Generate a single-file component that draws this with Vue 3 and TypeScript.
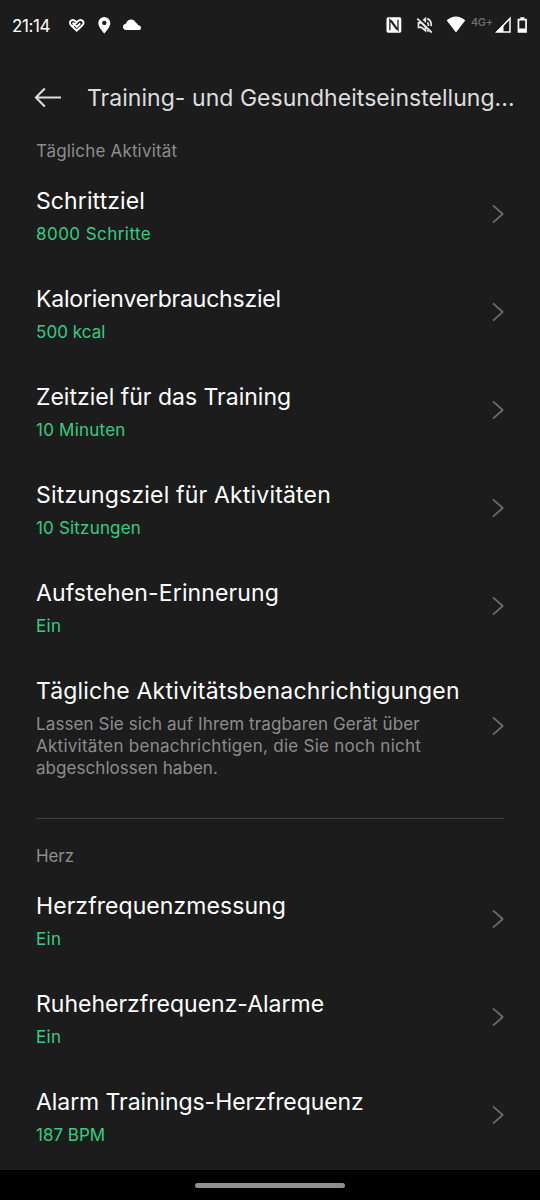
<script setup lang="ts">
interface Setting {
  title: string
  lines: string[]
  muted?: boolean
  titleSpacing: number
  lineSpacing: number[]
}
interface Section {
  name: string
  spacing: number
  items: Setting[]
}

const sections: Section[] = [
  {
    name: 'Tägliche Aktivität',
    spacing: 0.17,
    items: [
      { title: 'Schrittziel', lines: ['8000 Schritte'], titleSpacing: 0.1, lineSpacing: [0.45] },
      { title: 'Kalorienverbrauchsziel', lines: ['500 kcal'], titleSpacing: -0.2, lineSpacing: [0.05] },
      { title: 'Zeitziel für das Training', lines: ['10 Minuten'], titleSpacing: 0, lineSpacing: [0.22] },
      { title: 'Sitzungsziel für Aktivitäten', lines: ['10 Sitzungen'], titleSpacing: 0.18, lineSpacing: [0.18] },
      { title: 'Aufstehen-Erinnerung', lines: ['Ein'], titleSpacing: 0.13, lineSpacing: [0.3] },
      {
        title: 'Tägliche Aktivitätsbenachrichtigungen',
        lines: [
          'Lassen Sie sich auf Ihrem tragbaren Gerät über',
          'Aktivitäten benachrichtigen, die Sie noch nicht',
          'abgeschlossen haben.',
        ],
        muted: true,
        titleSpacing: 0.2,
        lineSpacing: [0.11, 0.26, 0.05],
      },
    ],
  },
  {
    name: 'Herz',
    spacing: -0.1,
    items: [
      { title: 'Herzfrequenzmessung', lines: ['Ein'], titleSpacing: 0.07, lineSpacing: [0.3] },
      { title: 'Ruheherzfrequenz-Alarme', lines: ['Ein'], titleSpacing: 0, lineSpacing: [0.3] },
      { title: 'Alarm Trainings-Herzfrequenz', lines: ['187 BPM'], titleSpacing: -0.07, lineSpacing: [0] },
    ],
  },
]
</script>

<template>
  <div class="screen">
    <div class="status">
      <span class="clock">21:14</span>
      <svg width="76" height="20" viewBox="67 15 76 20">
        <path d="M76.700 22.400 C74.800 20.300 72.700 19.500 71.200 20.600 C69.400 21.900 69.600 23.800 71 25.200 L76.700 30.600 L82.400 25.200 C83.900 23.700 84 21.800 82.300 20.600 C80.700 19.500 79 20.100 77.700 21.300 L72.800 26 M72.600 22.600 L76.800 26.800 L80.300 23.400" fill="none" stroke="#fff" stroke-width="1.900" />
        <path d="M104.300 17 a6 6 0 0 0 -6 6 c0 4.300 6 10.400 6 10.400 s6 -6.100 6 -10.400 a6 6 0 0 0 -6 -6z m0 3.700 a2.200 2.200 0 1 1 0 4.400 a2.200 2.200 0 0 1 0 -4.400z" fill="#fff" fill-rule="evenodd" />
        <path d="M126.300 30 C121.800 30 122 24 126.100 23.500 C127.200 18.700 133.800 17.700 136 23 C137.300 23.100 137.600 24 137.800 24.900 C142.300 25.600 141.600 30 138.800 30z" fill="#fff" />
      </svg>
      <svg class="right-icons" width="83" height="20" viewBox="385 15 83 20">
        <rect x="386.500" y="17.300" width="14.800" height="15.400" rx="1.600" fill="#fff" />
        <path d="M389.900 30.300 V19.800 L396.600 29.400 M391.200 20.400 L398 30 V19.700" fill="none" stroke="#1c1c1c" stroke-width="1.300" />
        <path d="M417.300 18.600 L431.700 32.500" stroke="#e8e8e8" stroke-width="1.800" />
        <path d="M418.500 22.900 h3 l4 4 v3.800 l-4 -3.400 h-3z M423.300 20.500 l2 -1.800 v3.600 M427.300 22.400 q1.500 1.300 1.200 3.600 M427.200 18.600 q4.700 2 4 7.600 M428.800 30.300 l-1.600 1" fill="none" stroke="#e8e8e8" stroke-width="1.700" />
        <path d="M446.600 20.300 Q456 12.700 465.300 20.300 L456 32.400z" fill="#fff" />
      </svg>
      <span class="network">4G+</span>
      <svg width="35" height="20" viewBox="494 15 35 20">
        <path d="M510 18.400 V31.900 H496.800z" fill="none" stroke="#fff" stroke-width="1.500" />
        <path d="M503.500 25 V32 H496z" fill="#fff" />
        <path d="M520.300 17.200 h4 v1.600 h2.600 v14 h-9.300 v-14 h2.700z M519.300 20.600 v8 h5.900 v-8z" fill="#fff" fill-rule="evenodd" />
      </svg>
    </div>

    <header class="header">
      <svg width="28" height="22" viewBox="0 0 28 22">
        <path d="M27 10.500 H2 M10.800 1.500 L1.900 10.500 L10.800 19.500" fill="none" stroke="#dedede" stroke-width="2" />
      </svg>
      <h1>Training- und Gesundheitseinstellung...</h1>
    </header>

    <main>
      <section v-for="section in sections" :key="section.name">
        <h2 :style="{ letterSpacing: section.spacing + 'px' }">{{ section.name }}</h2>
        <div v-for="item in section.items" :key="item.title" class="row">
          <div>
            <h3 :style="{ letterSpacing: item.titleSpacing + 'px' }">{{ item.title }}</h3>
            <p :class="{ muted: item.muted }">
              <span v-for="(line, i) in item.lines" :key="i" :style="{ letterSpacing: item.lineSpacing[i] + 'px' }">{{ line }}</span>
            </p>
          </div>
          <svg width="14" height="20" viewBox="0 0 14 20">
            <path d="M2 1.300 L11.700 10 L2 18.700" fill="none" stroke="#6c6c6c" stroke-width="1.700" stroke-linejoin="round" />
          </svg>
        </div>
      </section>
    </main>

    <footer><div class="handle"></div></footer>
  </div>
</template>

<style>
body {
  margin: 0;
  background: #1c1c1c;
}
</style>

<style scoped>
.screen {
  width: 540px;
  height: 1200px;
  display: flex;
  flex-direction: column;
  overflow: hidden;
  background: #1c1c1c;
  color: #fff;
  font-family: Inter, "Noto Sans", sans-serif;
}
h1, h2, h3, p {
  margin: 0;
  font-weight: 400;
  white-space: nowrap;
}
.status {
  height: 50px;
  flex: none;
  display: flex;
  align-items: center;
  padding: 0 11px 0 12px;
}
.clock {
  width: 55px;
  font-size: 17px;
  line-height: 20px;
  padding-top: 1px;
  letter-spacing: -0.4px;
  white-space: nowrap;
}
.right-icons {
  margin-left: auto;
  margin-right: 3px;
}
.network {
  width: 23px;
  font-size: 11px;
  font-weight: 500;
  line-height: 14px;
  margin-bottom: 7px;
  letter-spacing: -0.4px;
  color: #727272;
  white-space: nowrap;
}
.header {
  height: 85px;
  flex: none;
  display: flex;
  align-items: flex-start;
  padding: 33px 0 0 34px;
  gap: 25px;
  box-sizing: border-box;
}
.header svg {
  margin-top: 4px;
}
h1 {
  font-size: 23px;
  line-height: 30px;
  letter-spacing: 0.04px;
  color: #dedede;
}
main {
  flex: 1;
}
section {
  padding: 0 36px;
}
h2 {
  height: 25px;
  font-size: 17px;
  line-height: 22px;
  color: #8d8d8d;
}
section:first-child {
  padding-top: 5px;
}
section + section::before {
  content: "";
  display: block;
  height: 1px;
  margin: 21px 0 26px;
  background: #3e3e3e;
}
.row {
  display: flex;
  align-items: center;
  justify-content: space-between;
  padding: 21px 0 18px;
}
.row svg {
  margin: -21px -1px -18px 0;
  flex: none;
}
h3 {
  font-size: 23px;
  line-height: 30px;
  margin-bottom: 7px;
}
p {
  font-size: 17px;
  line-height: 22px;
  color: #34cd83;
}
p.muted {
  color: #8d8d8d;
}
p span {
  display: block;
}
footer {
  height: 30px;
  flex: none;
  display: flex;
  justify-content: center;
  align-items: center;
  background: #000;
}
.handle {
  width: 150px;
  height: 5px;
  border-radius: 3px;
  background: #8f8f8f;
}
</style>
